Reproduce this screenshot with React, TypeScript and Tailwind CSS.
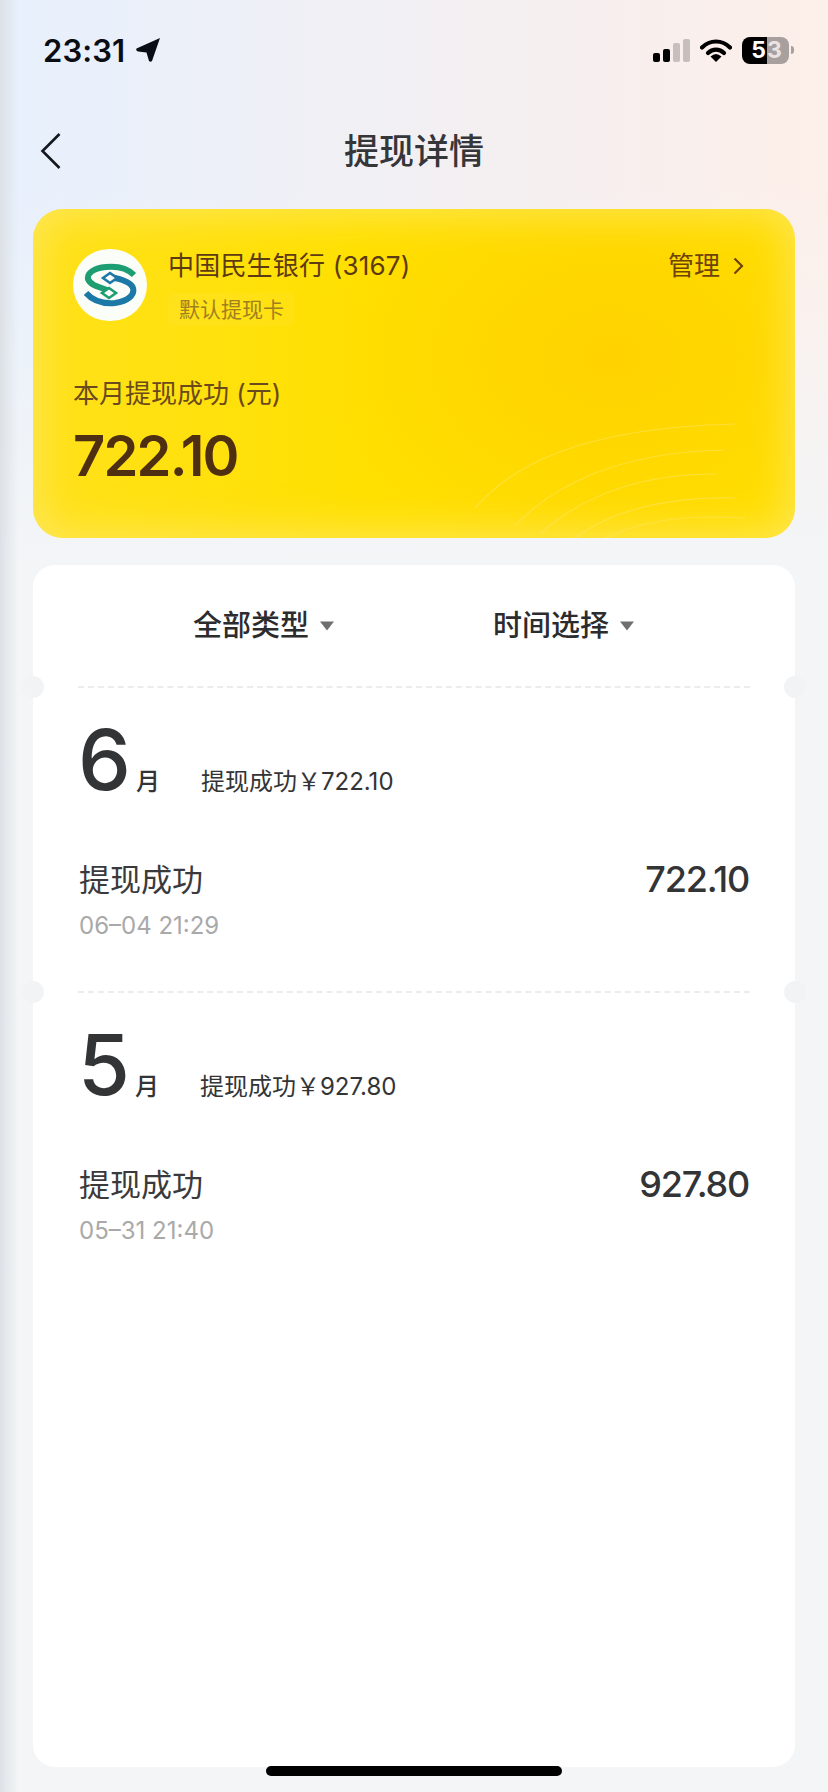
import React from 'react';

const FONT = "font-['Inter','Noto_Sans_CJK_SC',sans-serif]";

const StatusBar = () => (
  <div className="flex items-center justify-between h-[28px] mt-[36px] pl-[43px] pr-[34px]">
    <div className="flex items-center gap-[11px]">
      <span className="text-[31px] leading-none font-semibold text-[#0a0d14] tracking-[0.1px]">23:31</span>
      <svg width="24" height="24" viewBox="0 0 24 24">
        <path d="M24 0 L0.5 10.5 Q-0.5 13 2 13.5 L10.5 14.5 L13 23 Q14.5 24.5 16 23 Z" fill="#0a0d14" />
      </svg>
    </div>
    <div className="flex items-center">
      <div className="flex items-end gap-[3px] h-[23px]">
        <div className="w-[7px] h-[9px] rounded-[2px] bg-black" />
        <div className="w-[7px] h-[13px] rounded-[2px] bg-black" />
        <div className="w-[7px] h-[19px] rounded-[2px] bg-[#c6bfbd]" />
        <div className="w-[7px] h-[23px] rounded-[2px] bg-[#c6bfbd]" />
      </div>
      <svg className="ml-[10px]" width="32" height="24" viewBox="0 0 32 24">
        <path d="M2 9.5 C10 1.5 22 1.5 30 9.5" fill="none" stroke="#000" strokeWidth="4.2" strokeLinecap="round" />
        <path d="M8 15 C12.5 10.5 19.5 10.5 24 15" fill="none" stroke="#000" strokeWidth="4.2" strokeLinecap="round" />
        <path d="M10.5 18.6 Q16 13.6 21.5 18.6 L16 24 Z" fill="#000" />
      </svg>
      <div className="ml-[10px] flex items-center">
        <div className="flex w-[47px] h-[27px] rounded-[8px] overflow-hidden text-[23px] leading-none font-bold">
          <div className="w-[25px] bg-black text-white flex items-center justify-end pr-[1px]">5</div>
          <div className="flex-1 bg-[#a8a09e] text-[#e9e4e2] flex items-center">3</div>
        </div>
        <div className="ml-[2px] w-[3px] h-[8px] rounded-r-[3px] bg-[#a8a09e]" />
      </div>
    </div>
  </div>
);

const NavBar = () => (
  <div className="relative flex items-center justify-center h-[50px] mt-[62px]">
    <svg className="absolute left-[40px] top-[6px]" width="22" height="38" viewBox="0 0 22 38">
      <path d="M19.5 2 L2.5 19 L19.5 36" fill="none" stroke="#15171c" strokeWidth="2.6" />
    </svg>
    <h1 className="text-[35px] leading-none font-medium text-[#35363a]">提现详情</h1>
  </div>
);

const BankLogo = () => (
  <div className="w-[74px] h-[72px] shrink-0 rounded-full bg-[#fbfdf8] flex items-center justify-center">
    <svg width="54" height="44" viewBox="0 0 54 44">
      <path d="M51 12 C44 5 33 3 23 4 C11 5 4 10 5 16 C7 22 15 24 27 28" fill="none" stroke="#1d9d72" strokeWidth="6" />
      <path d="M3 30 C10 38 20 41 32 40 C45 38 52 32 50 25 C48 19 38 16 27 14" fill="none" stroke="#1c78a6" strokeWidth="6" />
      <path d="M27 10 L34 15 L27 20 L20 15 Z" fill="#fbfdf8" stroke="#1c78a6" strokeWidth="2.6" />
      <path d="M26 25 L33 30 L26 35 L19 30 Z" fill="#fbfdf8" stroke="#1d9d72" strokeWidth="2.6" />
    </svg>
  </div>
);

const BankCard = () => (
  <div className="relative mt-[33px] mx-[33px] h-[329px] rounded-[30px] overflow-hidden bg-[radial-gradient(ellipse_300px_220px_at_76%_45%,#ffd200_0%,rgba(255,214,0,0.75)_50%,rgba(255,223,0,0)_100%),linear-gradient(to_right,#ffe11a,#ffe000_45%,#ffe000)] shadow-[inset_0_0_40px_6px_rgba(255,232,110,0.75)]">
    {/* wave lines */}
    <svg className="absolute right-[40px] bottom-0" width="290" height="130" viewBox="0 0 290 130">
      <g fill="none" stroke="#ffe666" strokeWidth="1.2" opacity="0.55">
        <path d="M10 100 C45 60 110 20 270 16" />
        <path d="M50 118 C85 80 150 44 260 42" />
        <path d="M75 126 C115 90 170 66 250 66" />
        <path d="M110 130 C145 104 200 88 270 90" />
        <path d="M140 130 C175 114 215 106 280 110" />
      </g>
    </svg>
    <div className="relative flex pt-[40px] pl-[40px] pr-[51px]">
      <BankLogo />
      <div className="ml-[21px] flex-1">
        <div className="flex items-center justify-between h-[34px]">
          <span className="text-[26px] leading-none text-[#5c3a12] tracking-[0.2px]">中国民生银行 (3167)</span>
          <span className="flex items-center gap-[13px] text-[26px] leading-none text-[#6e4308]">
            管理
            <svg width="11" height="18" viewBox="0 0 11 18">
              <path d="M1.5 1.5 L9 9 L1.5 16.5" fill="none" stroke="#6e4308" strokeWidth="2.2" />
            </svg>
          </span>
        </div>
        <div className="mt-[10px] inline-block pl-[11px] pr-[10px] py-[3px] rounded-[6px] bg-[#ffe95a]/15 text-[21px] leading-[27px] text-[#a07f1e]">
          默认提现卡
        </div>
      </div>
    </div>
    <div className="relative mt-[51px] pl-[40px] text-[26px] leading-[34px] text-[#6a4a1c]">本月提现成功 (元)</div>
    <div className="relative mt-[15px] pl-[40px] text-[56px] leading-[60px] font-semibold tracking-[-1.8px] text-[#4f2f12]">722.10</div>
  </div>
);

const Caret = () => (
  <svg width="16" height="10" viewBox="0 0 16 10">
    <path d="M1 0.5 H15 L8 9.5 Z" fill="#6f6f6f" />
  </svg>
);

const Filters = () => (
  <div className="flex items-center justify-center gap-[158px] h-[121px]">
    <div className="flex items-center gap-[10px] text-[29px] font-medium leading-none text-[#2c2c2e]">
      全部类型
      <Caret />
    </div>
    <div className="flex items-center gap-[10px] text-[29px] font-medium leading-none text-[#2c2c2e]">
      时间选择
      <Caret />
    </div>
  </div>
);

const Divider = () => (
  <div className="relative">
    <div className="mx-[45px] border-t-2 border-dashed border-[#eaecee]" />
    <div className="absolute left-[-11px] top-[-10px] w-[22px] h-[22px] rounded-full bg-[#f1f3f5]" />
    <div className="absolute right-[-11px] top-[-10px] w-[22px] h-[22px] rounded-full bg-[#f1f3f5]" />
  </div>
);

type MonthProps = {
  month: string;
  total: string;
  amount: string;
  date: string;
};

const MonthSection = ({ month, total, amount, date }: MonthProps) => (
  <div className="h-[303px] pl-[46px] pr-[46px] pt-[27px]">
    <div className="flex items-baseline h-[90px] ml-[-1px]">
      <span className="text-[84px] leading-[90px] font-medium text-[#333436]">{month}</span>
      <span className="ml-[5px] text-[24px] leading-none font-medium text-[#333436]">月</span>
      <span className="ml-[41px] text-[24px] leading-none text-[#333436]">提现成功￥{total}</span>
    </div>
    <div className="mt-[56px] flex items-center justify-between h-[36px]">
      <span className="text-[31px] leading-none text-[#3a3a3c]">提现成功</span>
      <span className="text-[36px] leading-none font-medium tracking-[-1.2px] text-[#333436]">{amount}</span>
    </div>
    <div className="mt-[14px] text-[24px] leading-[30px] text-[#a9a9a9]">{date}</div>
  </div>
);

const App = () => {
  return (
    <div className={`${FONT} relative w-[828px] h-[1792px] overflow-hidden flex flex-col bg-[linear-gradient(to_right,#dde1e6,rgba(221,225,230,0)_18px),linear-gradient(to_bottom,rgba(243,245,247,0)_180px,#f3f5f7_560px),linear-gradient(to_right,#e7f0fd,#fdefe9)]`}>
      <StatusBar />
      <NavBar />
      <BankCard />
      <div className="mt-[27px] mx-[33px] flex-1 mb-[25px] rounded-[22px] bg-white">
        <Filters />
        <Divider />
        <MonthSection month="6" total="722.10" amount="722.10" date="06–04 21:29" />
        <Divider />
        <MonthSection month="5" total="927.80" amount="927.80" date="05–31 21:40" />
      </div>
      {/* home indicator */}
      <div className="absolute left-[266px] bottom-[16px] w-[296px] h-[10px] rounded-full bg-black" />
    </div>
  );
};

export default App;
